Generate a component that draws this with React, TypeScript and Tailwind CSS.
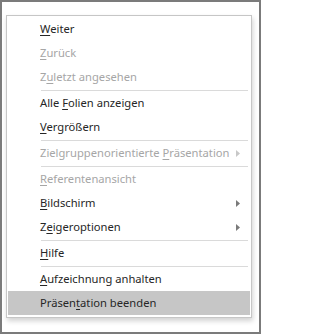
import React from 'react';

type Item =
  | { kind: 'sep' }
  | {
      kind: 'item';
      pre: string;
      key: string;
      post: string;
      disabled?: boolean;
      submenu?: boolean;
      active?: boolean;
    };

const items: Item[] = [
  { kind: 'item', pre: '', key: 'W', post: 'eiter' },
  { kind: 'item', pre: '', key: 'Z', post: 'urück', disabled: true },
  { kind: 'item', pre: 'Z', key: 'u', post: 'letzt angesehen', disabled: true },
  { kind: 'sep' },
  { kind: 'item', pre: 'Alle ', key: 'F', post: 'olien anzeigen' },
  { kind: 'item', pre: '', key: 'V', post: 'ergrößern' },
  { kind: 'sep' },
  { kind: 'item', pre: 'Zielgruppenorientierte ', key: 'P', post: 'räsentation', disabled: true, submenu: true },
  { kind: 'sep' },
  { kind: 'item', pre: '', key: 'R', post: 'eferentenansicht', disabled: true },
  { kind: 'item', pre: '', key: 'B', post: 'ildschirm', submenu: true },
  { kind: 'item', pre: 'Z', key: 'e', post: 'igeroptionen', submenu: true },
  { kind: 'sep' },
  { kind: 'item', pre: '', key: 'H', post: 'ilfe' },
  { kind: 'sep' },
  { kind: 'item', pre: '', key: 'A', post: 'ufzeichnung anhalten' },
  { kind: 'item', pre: 'Präsen', key: 't', post: 'ation beenden', active: true },
];

const Arrow: React.FC<{ disabled?: boolean }> = ({ disabled }) => (
  <svg width="4" height="7" viewBox="0 0 4 7" className="shrink-0">
    <path d="M0 0 L4 3.5 L0 7 Z" fill={disabled ? '#c8c8c8' : '#7a7a7a'} />
  </svg>
);

export default function App() {
  return (
    <div className="w-[261px] h-[334px] border-2 border-[#7b7b7b] bg-white font-['Noto_Sans',sans-serif]">
      <div className="ml-[4px] mt-[13px] w-[246px] border border-[#c6c6c6] bg-white p-px pb-[2px] shadow-[1px_3px_5px_rgba(0,0,0,0.18)]">
        {items.map((item, i) => {
          if (item.kind === 'sep') {
            return <div key={i} className="ml-[33px] mr-[2px] mt-px h-px bg-[#dadada]" />;
          }
          return (
            <div
              key={i}
              className={`flex h-6 items-center justify-between pl-[32px] pr-[10px] text-[11.2px] leading-none ${
                item.active ? 'bg-[#c6c6c6]' : ''
              } ${item.disabled ? 'text-[#a6a6a6]' : 'text-[#262626]'}`}
            >
              <span className="whitespace-nowrap">
                {item.pre}
                <span className="underline underline-offset-[2px]">{item.key}</span>
                {item.post}
              </span>
              {item.submenu && <Arrow disabled={item.disabled} />}
            </div>
          );
        })}
      </div>
    </div>
  );
}
